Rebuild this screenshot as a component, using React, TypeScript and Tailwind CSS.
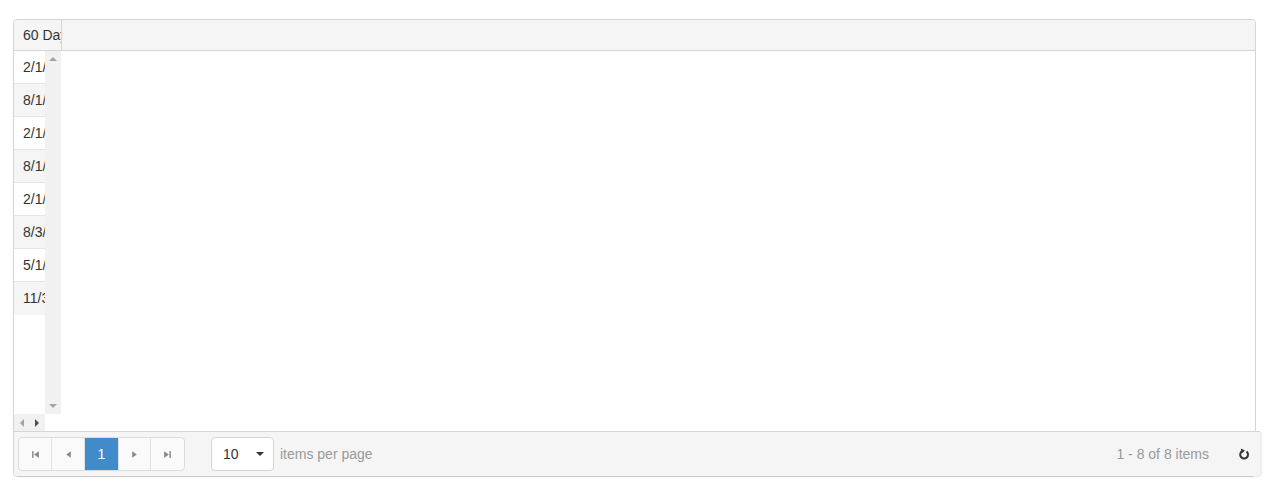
const dates = ['2/1/2016', '8/1/2016', '2/1/2017', '8/1/2017', '2/1/2018', '8/3/2018', '5/1/2019', '11/30/2019'];

function Tri({ dir, className }: { dir: 'up' | 'down' | 'left' | 'right'; className: string }) {
  const pts = {
    up: '0,5 5,0 10,5',
    down: '0,0 10,0 5,5',
    left: '5,0 5,10 0,5',
    right: '0,0 0,10 5,5',
  }[dir];
  const vb = dir === 'up' || dir === 'down' ? '0 0 10 5' : '0 0 5 10';
  return (
    <svg viewBox={vb} className={className}>
      <polygon points={pts} fill="currentColor" />
    </svg>
  );
}

function PagerIcon({ kind }: { kind: 'first' | 'prev' | 'next' | 'last' }) {
  return (
    <svg viewBox="0 0 8 8" className="w-[9px] h-[9px] text-[#888]">
      {kind === 'first' && (
        <>
          <rect x="1" y="1" width="1.3" height="6" fill="currentColor" />
          <polygon points="7,1 7,7 2.8,4" fill="currentColor" />
        </>
      )}
      {kind === 'prev' && <polygon points="6,1.2 6,6.8 2,4" fill="currentColor" />}
      {kind === 'next' && <polygon points="2,1.2 2,6.8 6,4" fill="currentColor" />}
      {kind === 'last' && (
        <>
          <polygon points="1,1 1,7 5.2,4" fill="currentColor" />
          <rect x="5.7" y="1" width="1.3" height="6" fill="currentColor" />
        </>
      )}
    </svg>
  );
}

function RefreshIcon() {
  return (
    <svg viewBox="0 0 12 12" className="w-[12px] h-[12px] text-[#333]">
      <path d="M4.2 3.2 A3.9 3.9 0 1 0 8.6 3.6" fill="none" stroke="currentColor" strokeWidth="2" />
      <polygon points="2.8,0.6 7,2.4 3.6,5.6" fill="currentColor" />
    </svg>
  );
}

export default function App() {
  return (
    <div className="min-h-screen bg-white pt-[19px] pl-[13px] font-['Liberation_Sans',Arial,sans-serif] text-[14px] text-[#333]">
      <div className="w-[1243px] h-[458px] border border-[#d5d5d5] rounded-[4px] flex flex-col">
        {/* Header */}
        <div className="h-[31px] bg-[#f5f5f5] border-b border-[#d5d5d5] flex shrink-0 rounded-t-[4px]">
          <div className="w-[48px] border-r border-[#d5d5d5] pl-[9px] overflow-hidden whitespace-nowrap leading-[31px]">
            60 Days Past Due
          </div>
        </div>

        {/* Content */}
        <div className="flex-1 flex flex-col min-h-0">
          <div className="flex flex-1 min-h-0">
            <div className="w-[31px] flex flex-col">
              {dates.map((d, i) => (
                <div
                  key={i}
                  className={`h-[33px] pl-[9px] leading-[33px] overflow-hidden whitespace-nowrap ${
                    i < dates.length - 1 ? 'border-b border-[#e4e4e4]' : ''
                  } ${i % 2 === 1 ? 'bg-[#f5f5f5]' : 'bg-white'}`}
                >
                  {d}
                </div>
              ))}
            </div>
            <div className="w-[16px] bg-[#f1f1f1] flex flex-col items-center justify-between pt-[6px] pb-[6px]">
              <Tri dir="up" className="w-[8px] h-[4px] text-[#a3a3a3]" />
              <Tri dir="down" className="w-[8px] h-[4px] text-[#a3a3a3]" />
            </div>
          </div>
          <div className="h-[17px] flex shrink-0">
            <div className="w-[31px] bg-[#f1f1f1] flex items-center justify-between px-[6px]">
              <Tri dir="left" className="w-[4px] h-[8px] text-[#a3a3a3]" />
              <Tri dir="right" className="w-[4px] h-[8px] text-[#505050]" />
            </div>
          </div>
        </div>

        {/* Pager */}
        <div className="h-[45px] shrink-0 bg-[#f5f5f5] border-t border-[#d5d5d5] -mr-[5px] shadow-[2px_1px_2px_rgba(0,0,0,0.08)] rounded-b-[4px] flex items-center pl-[4px] pr-[10px] relative">
          <div className="flex h-[34px] border border-[#dcdcdc] rounded-[4px] bg-[#fafafa] overflow-hidden">
            <div className="w-[33px] flex items-center justify-center border-r border-[#e2e2e2]">
              <PagerIcon kind="first" />
            </div>
            <div className="w-[33px] flex items-center justify-center border-r border-[#e2e2e2]">
              <PagerIcon kind="prev" />
            </div>
            <div className="w-[33px] flex items-center justify-center bg-[#428bca] text-white">1</div>
            <div className="w-[33px] flex items-center justify-center border-x border-[#e2e2e2]">
              <PagerIcon kind="next" />
            </div>
            <div className="w-[33px] flex items-center justify-center">
              <PagerIcon kind="last" />
            </div>
          </div>
          <div className="ml-[26px] w-[63px] h-[34px] bg-white border border-[#d5d5d5] rounded-[4px] flex items-center justify-between pl-[11px] pr-[9px]">
            <span>10</span>
            <Tri dir="down" className="w-[8px] h-[6px] text-[#333]" />
          </div>
          <span className="ml-[6px] text-[#999]">items per page</span>
          <span className="ml-auto text-[#999]">1 - 8 of 8 items</span>
          <span className="ml-[29px]">
            <RefreshIcon />
          </span>
        </div>
      </div>
    </div>
  );
}
